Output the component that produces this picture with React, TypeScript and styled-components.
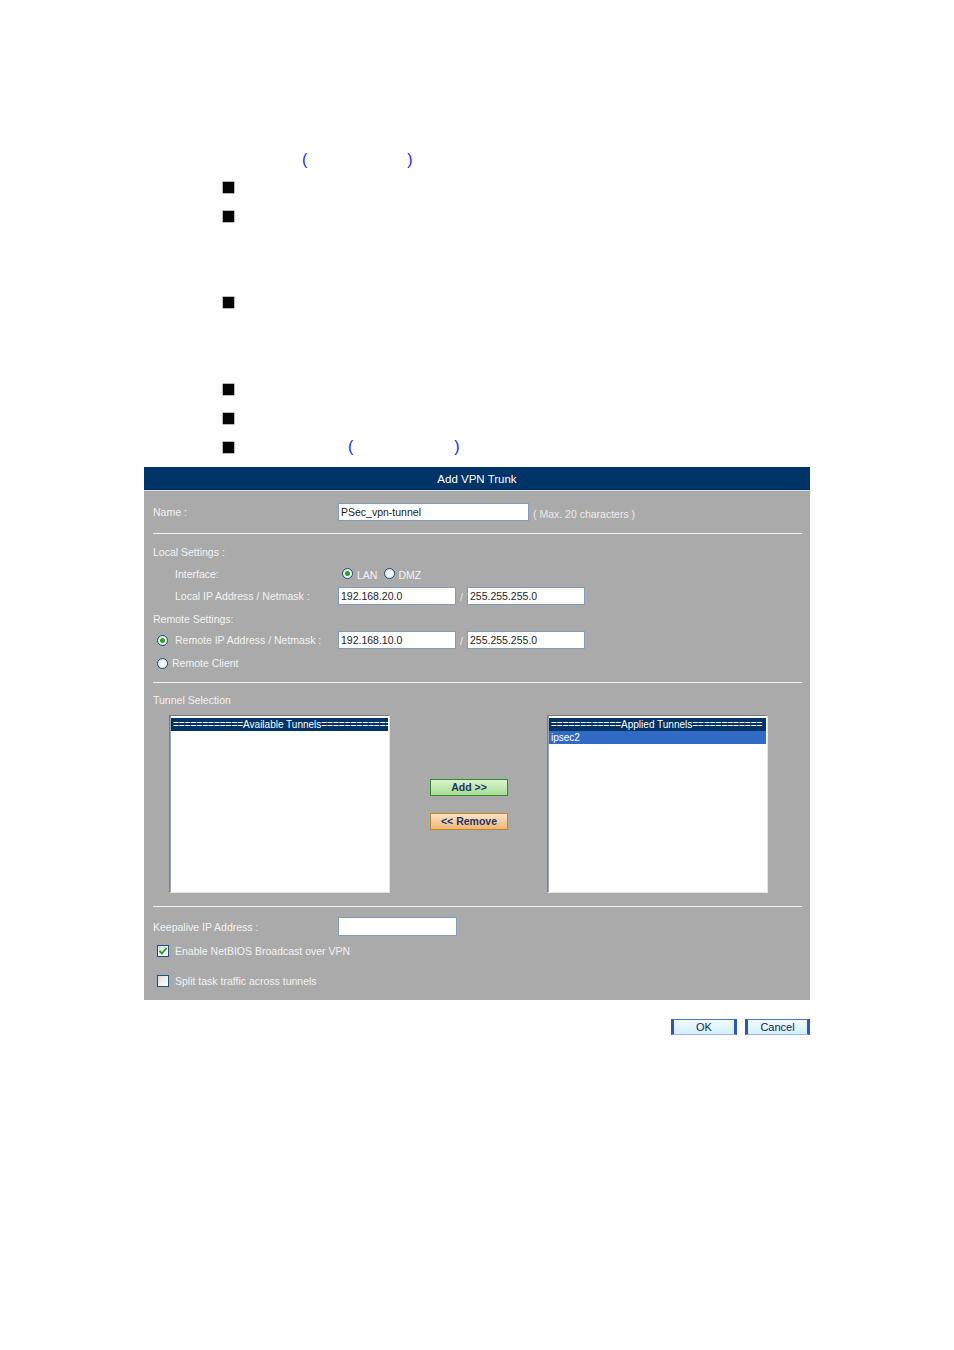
import React from 'react';
import styled, { createGlobalStyle } from 'styled-components';

const Global = createGlobalStyle`
  html, body { margin: 0; padding: 0; background: #ffffff; }
  body { font-family: "Liberation Sans", Arial, sans-serif; }
  * { box-sizing: border-box; }
`;

const Page = styled.div`
  width: 954px;
  min-height: 1350px;
  background: #ffffff;
`;

const Intro = styled.div`
  padding-top: 146px;
`;

const Spacer = styled.div<{ $h: number }>`
  height: ${p => p.$h}px;
`;

const Line = styled.div<{ $h: number; $indent?: number }>`
  height: ${p => p.$h}px;
  display: flex;
  align-items: center;
  padding-left: ${p => p.$indent ?? 223}px;
`;

const Bullet = styled.span`
  width: 11px;
  height: 11px;
  background: #050505;
  box-shadow: 0 0 0 0.5px #777;
  flex-shrink: 0;
`;

const Paren = styled.span<{ $gap: number }>`
  color: #2121ff;
  font-size: 16px;
  line-height: 1;
  margin-left: ${p => p.$gap}px;
`;

const Panel = styled.section`
  margin: 6px 0 0 144px;
  width: 666px;
  background: #aaaaaa;
  color: #f3f3f3;
  font-size: 10.5px;
`;

const Header = styled.div`
  height: 24px;
  background: #003366;
  border-bottom: 1px solid #dcdcdc;
  color: #ffffff;
  font-size: 11.5px;
  display: flex;
  align-items: center;
  justify-content: center;
`;

const Body = styled.div`
  padding: 0 8px 3px 9px;
`;

const Section = styled.div<{ $pt: number; $pb: number }>`
  padding-top: ${p => p.$pt}px;
  padding-bottom: ${p => p.$pb}px;
`;

const Row = styled.div<{ $h: number }>`
  height: ${p => p.$h}px;
  display: flex;
  align-items: center;
`;

const Label = styled.span<{ $indent?: number; $gap?: number }>`
  width: 185px;
  flex-shrink: 0;
  display: flex;
  align-items: center;
  gap: ${p => p.$gap ?? 0}px;
  padding-left: ${p => p.$indent ?? 0}px;
  white-space: nowrap;
`;

const Divider = styled.div`
  height: 1px;
  background: #f2f2f2;
`;

const TextInput = styled.input<{ $w: number; $h?: number }>`
  width: ${p => p.$w}px;
  height: ${p => p.$h ?? 18}px;
  border: 1px solid #7f9db9;
  background: #ffffff;
  padding: 0 2px;
  font-family: "Liberation Sans", Arial, sans-serif;
  font-size: 10.5px;
  color: #1d1d1d;
  outline: none;
`;

const Hint = styled.span`
  margin-left: 4px;
  padding-top: 3px;
  color: #ececec;
`;

const Slash = styled.span`
  width: 11px;
  text-align: center;
  color: #e8e8e8;
  padding-top: 2px;
`;

const RadioDot = styled.span<{ $on?: boolean; $ml?: number }>`
  width: 11px;
  height: 11px;
  border-radius: 50%;
  border: 1px solid #1e4f7c;
  background: radial-gradient(circle at 60% 60%, #ffffff 0%, #f2f2f2 45%, #cfcfcf 100%);
  margin-left: ${p => p.$ml ?? 0}px;
  flex-shrink: 0;
  display: inline-flex;
  align-items: center;
  justify-content: center;
  &::after {
    content: "";
    width: 5px;
    height: 5px;
    border-radius: 50%;
    background: ${p => (p.$on ? '#22a322' : 'transparent')};
  }
`;

const Choice = styled.span<{ $ml?: number }>`
  margin-left: ${p => p.$ml ?? 0}px;
  padding-top: 2px;
`;

const CheckBox = styled.span`
  width: 12px;
  height: 12px;
  margin-left: 4px;
  border: 1px solid #1c4f7e;
  background: linear-gradient(135deg, #d9d9d9 0%, #f4f4f4 60%, #ffffff 100%);
  flex-shrink: 0;
  display: inline-flex;
  align-items: center;
  justify-content: center;
`;

const CheckText = styled.span`
  margin-left: 6px;
`;

const ListArea = styled.div`
  display: flex;
  padding-left: 16px;
  height: 178px;
`;

const ListBox = styled.div`
  width: 221px;
  height: 178px;
  background: #ffffff;
  border-style: solid;
  border-width: 1px;
  border-color: #7a7a7a #e6e6de #e6e6de #6e8298;
  box-shadow: inset 1px 0 0 #9aa6b4;
  padding: 2px 1px 1px 1px;
  font-size: 10px;
  overflow: hidden;
`;

const Option = styled.div<{ $kind: 'head' | 'sel' }>`
  height: 13px;
  line-height: 13px;
  padding-left: 2px;
  white-space: nowrap;
  overflow: hidden;
  color: #ffffff;
  background: ${p => (p.$kind === 'head' ? '#003366' : '#316ac5')};
`;

const MoveColumn = styled.div`
  width: 78px;
  margin: 0 39px 0 40px;
  display: flex;
  flex-direction: column;
  justify-content: center;
  gap: 17px;
`;

const MoveButton = styled.button<{ $tone: 'green' | 'orange' }>`
  height: 17px;
  width: 78px;
  padding: 0;
  font-family: "Liberation Sans", Arial, sans-serif;
  font-size: 10.5px;
  font-weight: bold;
  color: #1f3466;
  border: 1px solid ${p => (p.$tone === 'green' ? '#2a8c2a' : '#c6851f')};
  background: ${p =>
    p.$tone === 'green'
      ? 'linear-gradient(#d9f3cb, #a9dd95)'
      : 'linear-gradient(#fbe4c6, #ecb679)'};
`;

const Footer = styled.div`
  margin: 19px 0 0 144px;
  width: 666px;
  display: flex;
  justify-content: flex-end;
  gap: 8px;
`;

const DialogButton = styled.button<{ $w: number }>`
  width: ${p => p.$w}px;
  height: 16px;
  padding: 0;
  font-family: "Liberation Sans", Arial, sans-serif;
  font-size: 11px;
  color: #13284f;
  border-style: solid;
  border-color: #4f74d2 #2f55bb #9bb6ea #2f55bb;
  border-width: 1px 3px 1px 3px;
  background: linear-gradient(#f2fbff, #d3efff);
`;

const Check = () => (
  <svg width="10" height="10" viewBox="0 0 10 10">
    <path d="M1.5 5 L4 7.5 L8.5 2" fill="none" stroke="#1f9a1f" strokeWidth="1.8" />
  </svg>
);

export default function App() {
  return (
    <Page>
      <Global />
      <Intro>
        <Line $h={28} $indent={0}>
          <Paren $gap={302}>(</Paren>
          <Paren $gap={100}>)</Paren>
        </Line>
        <Line $h={26}><Bullet /></Line>
        <Line $h={32}><Bullet /></Line>
        <Spacer $h={56} />
        <Line $h={28}><Bullet /></Line>
        <Spacer $h={59} />
        <Line $h={28}><Bullet /></Line>
        <Line $h={30}><Bullet /></Line>
        <Line $h={28}>
          <Bullet />
          <Paren $gap={114}>(</Paren>
          <Paren $gap={101}>)</Paren>
        </Line>
      </Intro>

      <Panel>
        <Header>Add VPN Trunk</Header>
        <Body>
          <Row $h={42}>
            <Label>Name :</Label>
            <TextInput $w={191} value="PSec_vpn-tunnel" readOnly />
            <Hint>( Max. 20 characters )</Hint>
          </Row>
          <Divider />

          <Section $pt={7} $pb={7}>
            <Row $h={22}>
              <Label>Local Settings :</Label>
            </Row>
            <Row $h={21}>
              <Label $indent={22}>Interface:</Label>
              <RadioDot $on $ml={4} />
              <Choice $ml={4}>LAN</Choice>
              <RadioDot $ml={7} />
              <Choice $ml={3}>DMZ</Choice>
            </Row>
            <Row $h={24}>
              <Label $indent={22}>Local IP Address / Netmask :</Label>
              <TextInput $w={118} value="192.168.20.0" readOnly />
              <Slash>/</Slash>
              <TextInput $w={118} value="255.255.255.0" readOnly />
            </Row>
            <Row $h={21}>
              <Label>Remote Settings:</Label>
            </Row>
            <Row $h={22}>
              <Label $gap={7}>
                <RadioDot $on $ml={4} />
                Remote IP Address / Netmask :
              </Label>
              <TextInput $w={118} value="192.168.10.0" readOnly />
              <Slash>/</Slash>
              <TextInput $w={118} value="255.255.255.0" readOnly />
            </Row>
            <Row $h={24}>
              <Label $gap={4}>
                <RadioDot $ml={4} />
                Remote Client
              </Label>
            </Row>
          </Section>
          <Divider />

          <Section $pt={7} $pb={13}>
            <Row $h={20}>
              <Label>Tunnel Selection</Label>
            </Row>
            <Spacer $h={5} />
            <ListArea>
              <ListBox>
                <Option $kind="head">============Available Tunnels============</Option>
              </ListBox>
              <MoveColumn>
                <MoveButton $tone="green">Add &gt;&gt;</MoveButton>
                <MoveButton $tone="orange">&lt;&lt; Remove</MoveButton>
              </MoveColumn>
              <ListBox>
                <Option $kind="head">============Applied Tunnels============</Option>
                <Option $kind="sel">ipsec2</Option>
              </ListBox>
            </ListArea>
          </Section>
          <Divider />

          <Section $pt={9} $pb={0}>
            <Row $h={21}>
              <Label>Keepalive IP Address :</Label>
              <TextInput $w={119} $h={19} value="" readOnly />
            </Row>
            <Row $h={28}>
              <CheckBox><Check /></CheckBox>
              <CheckText>Enable NetBIOS Broadcast over VPN</CheckText>
            </Row>
            <Row $h={32}>
              <CheckBox />
              <CheckText>Split task traffic across tunnels</CheckText>
            </Row>
          </Section>
        </Body>
      </Panel>

      <Footer>
        <DialogButton $w={66}>OK</DialogButton>
        <DialogButton $w={65}>Cancel</DialogButton>
      </Footer>
    </Page>
  );
}
